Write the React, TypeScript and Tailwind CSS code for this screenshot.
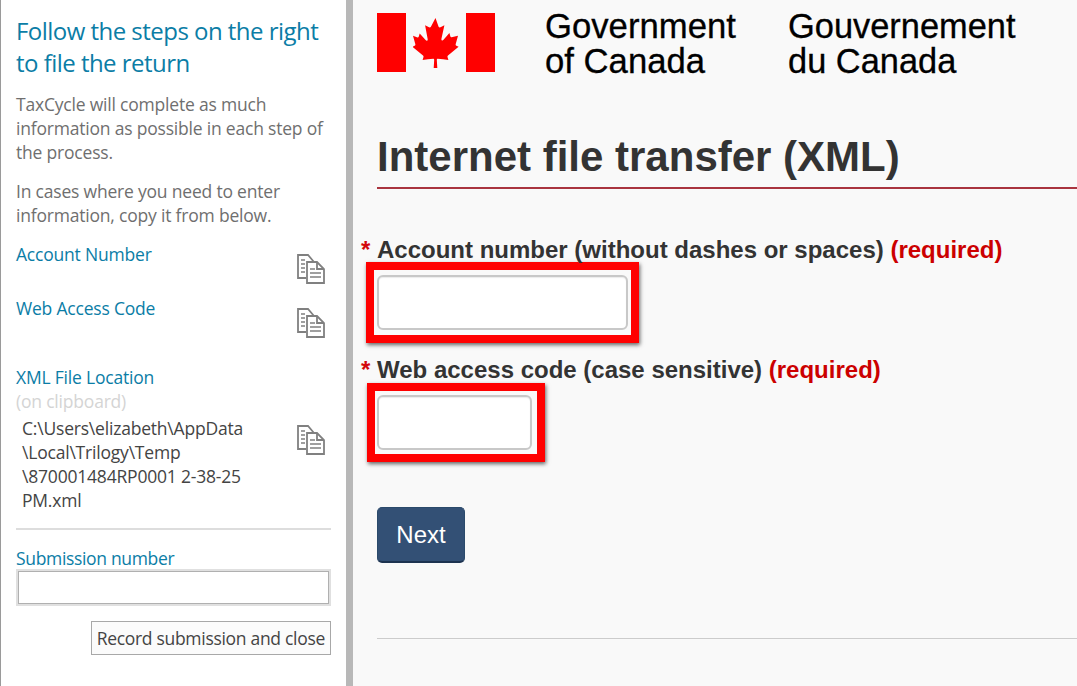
function CopyIcon() {
  return (
    <svg width="28" height="30" viewBox="0 0 28 30" fill="none" stroke="#808080" strokeWidth="1.8" className="shrink-0">
      <path d="M9 24H1V1h10l6 7" />
      <path d="M10 8h10l7 7v14H10z" fill="#fff" />
      <path d="M20 8v7h7" />
      <path d="M4 6h4M4 10h4M4 14h4M4 18h4" strokeWidth="1.5" />
      <path d="M13 15h5M13 19h11M13 23h11" strokeWidth="1.5" />
    </svg>
  );
}

function MapleLeaf() {
  return (
    <svg width="46" height="50" viewBox="0 0 46 50" fill="#ff0000" className="shrink-0">
      <path d="M22.500 0l-4.600 8.700c-.5.9-1.500.8-2.400.3l-3.400-1.700 2.500 13.400c.5 2.400-1.200 2.400-2 1.300l-5.900-6.600-1 3.300c-.1.400-.6.900-1.200.8L-.0 17.800l2 7.200c.4 1.600.8 2.300-.4 2.700L-.6 28.800l10.600 8.600c.4.300.6.900.5 1.500l-.9 3.100c3.700-.4 7-.8 10.700-1.200.3 0 .9.500.9 1L20.700 50h3.600l-.5-8.200c0-.5.500-1 .9-1 3.700.4 7 .8 10.700 1.200l-.9-3.100c-.1-.6.100-1.200.5-1.500l10.600-8.600-2.200-1.100c-1.200-.4-.8-1.100-.4-2.700l2-7.200-6.400 1.400c-.6.100-1.100-.4-1.200-.8l-1-3.300-5.900 6.600c-.8 1.100-2.500 1.100-2-1.300L31.400 7.300 28 9c-.9.500-1.900.6-2.400-.3z" />
    </svg>
  );
}

const sans = "font-['Liberation_Sans',Arial,sans-serif]";

export default function App() {
  return (
    <div className="flex h-[686px] w-[1077px] overflow-hidden bg-[#f9f9f9]">
      <aside className="flex h-full w-[346px] shrink-0 flex-col border-l border-l-[#9a9a9a] bg-white pl-[15px] pr-[15px] pt-[15px] font-['Open_Sans',sans-serif] text-[17.5px] leading-[24px] tracking-[-0.2px] text-[#6f6f6f]">
        <h2 className="text-[24px] leading-[32px] tracking-[-0.53px] text-[#0b7da6]">
          Follow the steps on the right
          <br />
          to file the return
        </h2>
        <p className="mt-[13px]">
          TaxCycle will complete as much
          <br />
          information as possible in each step of
          <br />
          the process.
        </p>
        <p className="mt-[15px]">
          In cases where you need to enter
          <br />
          information, copy it from below.
        </p>
        <div className="mt-[15px] flex h-[54px] justify-between pr-[6px]">
          <span className="text-[#0b7da6]">Account Number</span>
          <span className="mt-[12px]"><CopyIcon /></span>
        </div>
        <div className="flex h-[57px] justify-between pr-[6px]">
          <span className="text-[#0b7da6]">Web Access Code</span>
          <span className="mt-[12px]"><CopyIcon /></span>
        </div>
        <div className="mt-[12px] text-[#0b7da6]">XML File Location</div>
        <div className="text-[#d4d4d4]">(on clipboard)</div>
        <div className="mt-[3px] flex justify-between pr-[6px]">
          <div className="pl-[6px] text-[#444444]">
            C:\Users\elizabeth\AppData
            <br />
            \Local\Trilogy\Temp
            <br />
            \870001484RP0001 2-38-25
            <br />
            PM.xml
          </div>
          <span className="mt-[9px]"><CopyIcon /></span>
        </div>
        <hr className="mt-[16px] border-t-2 border-t-[#dddddd]" />
        <div className="mt-[16px] tracking-[-0.33px] text-[#0b7da6]">Submission number</div>
        <input className="mt-[-1px] h-[37px] w-full border-2 border-[#e0e0e0] bg-white shadow-[inset_0_0_0_1px_#b0b0b0]" />
        <div className="mt-[15px] flex justify-end">
          <button className="h-[34px] border border-[#a8a8a8] bg-[#fbfbfb] px-[5px] tracking-[-0.3px] text-[#444444]">
            Record submission and close
          </button>
        </div>
      </aside>
      <div className="h-full w-[7px] shrink-0 bg-[#b8b8b8]" />
      <main className={`min-w-0 flex-1 pl-[24px] pt-[13px] ${sans}`}>
        <header className="flex h-[59px] items-start">
          <div className="flex h-[59px] w-[118px] shrink-0 items-center justify-between bg-[#ff0000]">
            <div className="flex h-full w-full items-center justify-center border-x-[29px] border-x-[#ff0000] bg-[#f9f9f9]">
              <MapleLeaf />
            </div>
          </div>
          <div className="ml-[50px] mt-[-4px] w-[243px] text-[34.7px] leading-[35px] text-black [-webkit-text-stroke:0.3px_black]">
            Government
            <br />
            of Canada
          </div>
          <div className="mt-[-4px] text-[34.4px] leading-[35px] text-black [-webkit-text-stroke:0.3px_black]">
            Gouvernement
            <br />
            du Canada
          </div>
        </header>
        <h1 className="mt-[57px] border-b-2 border-b-[#a9343f] pb-[2px] text-[42px] font-bold leading-[56px] text-[#333333]">
          Internet file transfer (XML)
        </h1>
        <label className="mt-[48px] ml-[-16px] flex text-[24px] font-bold leading-[26px] text-[#333333]">
          <span className="w-[16px] text-[#d3080c]">*</span>
          <span>
            Account number (without dashes or spaces) <span className="text-[#cc0000]">(required)</span>
          </span>
        </label>
        <div className="mt-[-1px] ml-[-11px] w-[273px] border-[8px] border-[#ff0000] px-[3px] py-[5px] shadow-[1px_2px_4px_rgba(0,0,0,0.6)]">
          <input className="block h-[55px] w-full rounded-[6px] border-2 border-[#c8c8c8] bg-white shadow-[inset_0_1px_1px_rgba(0,0,0,0.08)]" />
        </div>
        <label className="mt-[14px] ml-[-16px] flex text-[24px] font-bold leading-[26px] text-[#333333]">
          <span className="w-[16px] text-[#d3080c]">*</span>
          <span>
            Web access code (case sensitive) <span className="text-[#cc0000]">(required)</span>
          </span>
        </label>
        <div className="ml-[-10px] w-[178px] border-[8px] border-[#ff0000] py-[4px] pl-[2px] pr-[5px] shadow-[1px_2px_4px_rgba(0,0,0,0.6)]">
          <input className="block h-[55px] w-full rounded-[6px] border-2 border-[#c8c8c8] bg-white shadow-[inset_0_1px_1px_rgba(0,0,0,0.08)]" />
        </div>
        <button className="mt-[45px] block h-[56px] w-[88px] rounded-[5px] border border-[#2b4a6b] border-b-2 border-b-[#1d3350] bg-[#335075] text-[24px] text-white">
          Next
        </button>
        <hr className="mt-[75px] border-t border-t-[#cccccc]" />
      </main>
    </div>
  );
}
